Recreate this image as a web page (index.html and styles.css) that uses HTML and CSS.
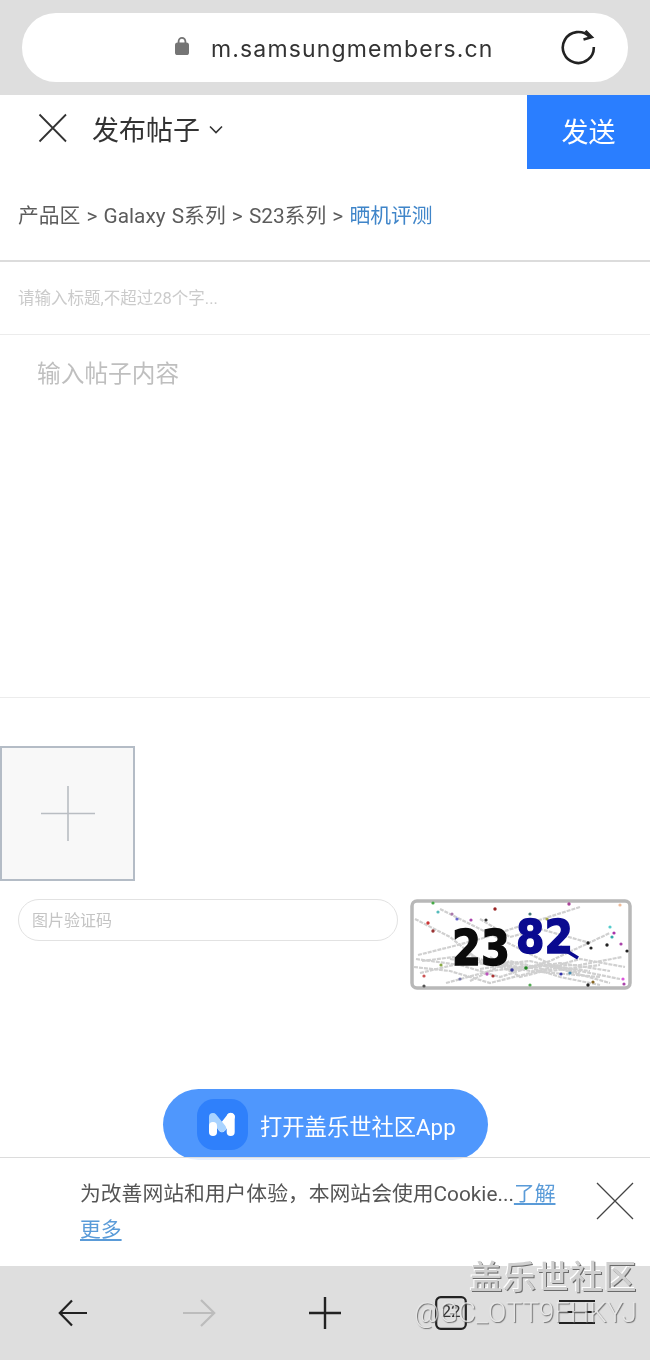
FILE: index.html
```html
<!DOCTYPE html>
<html lang="zh-CN">
<head>
<meta charset="utf-8">
<title>发布帖子</title>
<link rel="stylesheet" href="styles.css">
</head>
<body>
<div class="screen">
  <div class="urlbar">
    <div class="urlpill">
      <svg class="lock" width="16" height="20" viewBox="0 0 16 20"><path d="M4.600 8V5.200a3.400 3.400 0 0 1 6.800 0V8" fill="none" stroke="#757575" stroke-width="1.800"/><rect x="1" y="6.500" width="14" height="12.500" rx="2.600" fill="#757575"/></svg>
      <span class="url">m.samsungmembers.cn</span>
      <svg class="reload" width="36" height="38" viewBox="0 0 36 38"><path d="M33.800 18A15.500 15.500 0 1 1 29.500 7.800" fill="none" stroke="#222" stroke-width="2.600"/><path d="M25.500 1.800 31.800 8.200 23.500 10.500" fill="none" stroke="#222" stroke-width="2.600"/></svg>
    </div>
  </div>

  <header class="topbar">
    <svg class="close" width="30" height="30" viewBox="0 0 30 30"><path d="M1.500 1.500 28 28.500M28 1.500 1.500 28.500" stroke="#333" stroke-width="1.800" fill="none"/></svg>
    <span class="title">发布帖子</span>
    <svg class="chev" width="14" height="9" viewBox="0 0 14 9"><path d="M1 1.500 7 7.500 13 1.500" stroke="#333" stroke-width="1.600" fill="none"/></svg>
    <button class="send">发送</button>
  </header>

  <nav class="crumbs">产品区 &gt; Galaxy S系列 &gt; S23系列 &gt; <a class="crumb-current">晒机评测</a></nav>

  <div class="title-input">请输入标题,不超过28个字...</div>
  <div class="content-input">输入帖子内容</div>

  <section class="uploads">
    <div class="upload">
      <svg width="54" height="56" viewBox="0 0 54 56"><path d="M27 0V55M0 27.500H54" stroke="#b9bdc2" stroke-width="1.600" fill="none"/></svg>
    </div>
  </section>

  <section class="captcha">
    <div class="captcha-input">图片验证码</div>
    <svg class="captcha-img" width="222" height="91" viewBox="0 0 222 91">
      <rect x="2" y="2" width="218" height="87" rx="5" fill="#fff" stroke="#b8b8b8" stroke-width="3.500"/>
      <g class="noise" fill="none" stroke="#d0d0d0" stroke-width="2.200" stroke-dasharray="4 1">
        <path d="M5 20 40 38 70 62 120 72 190 78"/>
        <path d="M8 56 40 48 70 40 120 24 170 8"/>
        <path d="M6 60 50 66 90 78 140 62 200 34"/>
        <path d="M4 68 40 72 80 84 120 74 170 60 215 68"/>
        <path d="M30 10 70 30 110 50 150 70 200 84"/>
        <path d="M10 74 60 62 110 68 170 66 212 58"/>
        <path d="M36 84 80 72 130 66 180 72"/>
        <path d="M60 82 100 62 150 78 190 86"/>
        <path d="M70 20 100 38 130 30 180 44"/>
        <path d="M12 62 60 56 100 72 150 64 200 72"/>
        <path d="M40 60 80 66 120 62 170 74"/>
        <path d="M70 70 110 64 140 72 190 66"/>
        <path d="M80 58 110 78 150 68 210 80"/>
      </g>
      <g class="noise">
        <circle cx="18" cy="24" r="1.700" fill="#c33"/><circle cx="23" cy="32" r="1.700" fill="#933"/><circle cx="28" cy="13" r="1.600" fill="#5bb"/><circle cx="23" cy="4" r="1.600" fill="#4a4"/><circle cx="42" cy="15" r="1.600" fill="#a7a"/><circle cx="47" cy="20" r="1.600" fill="#66c"/><circle cx="61" cy="21" r="1.600" fill="#a4a"/><circle cx="76" cy="21" r="1.600" fill="#333"/><circle cx="85" cy="10" r="1.700" fill="#922"/><circle cx="120" cy="15" r="1.600" fill="#477"/><circle cx="137" cy="20" r="1.600" fill="#aa4"/><circle cx="210" cy="6" r="1.600" fill="#eb9"/><circle cx="159" cy="5" r="1.700" fill="#a49"/><circle cx="200" cy="28" r="1.600" fill="#5cc"/><circle cx="178" cy="44" r="1.700" fill="#222"/><circle cx="204" cy="34" r="1.600" fill="#a3a"/><circle cx="202" cy="38" r="1.600" fill="#3aa"/><circle cx="197" cy="46" r="1.700" fill="#222"/><circle cx="211" cy="45" r="1.600" fill="#a4a"/><circle cx="217" cy="52" r="1.600" fill="#222"/><circle cx="181" cy="49" r="1.600" fill="#222"/><circle cx="14" cy="77" r="1.600" fill="#c55"/><circle cx="50" cy="80" r="1.600" fill="#77a"/><circle cx="31" cy="66" r="1.600" fill="#8a4"/><circle cx="77" cy="75" r="1.700" fill="#b5b"/><circle cx="83" cy="77" r="1.600" fill="#a33"/><circle cx="116" cy="69" r="1.800" fill="#282"/><circle cx="102" cy="71" r="1.800" fill="#339"/><circle cx="151" cy="75" r="1.600" fill="#33a"/><circle cx="183" cy="83" r="1.600" fill="#862"/><circle cx="213" cy="80" r="1.600" fill="#d5d"/><circle cx="214" cy="85" r="1.600" fill="#a4a"/><circle cx="14" cy="87" r="1.600" fill="#555"/><circle cx="178" cy="86" r="1.700" fill="#222"/><circle cx="120" cy="86" r="1.600" fill="#5a5"/><circle cx="160" cy="74" r="1.600" fill="#48a"/>
      </g>
      <text class="cap-a" x="42" y="66" textLength="58" lengthAdjust="spacingAndGlyphs">23</text>
      <text class="cap-b" x="106" y="54" textLength="57" lengthAdjust="spacingAndGlyphs">82</text>
      <path class="cap-tail" d="M150 48 168 59"/>
    </svg>
  </section>

  <div class="bottom">
    <div class="cookie">
      <p class="cookie-text">为改善网站和用户体验，本网站会使用Cookie...<a class="cookie-link">了解更多</a></p>
      <svg class="cookie-close" width="38" height="38" viewBox="0 0 38 38"><path d="M1 1 37 37M37 1 1 37" stroke="#444" stroke-width="1.300" fill="none"/></svg>
    </div>
    <footer class="toolbar">
      <svg width="30" height="28" viewBox="0 0 30 28"><path d="M29 14H2M14 1.500 1.800 14 14 26.500" stroke="#222" stroke-width="2.200" fill="none"/></svg>
      <svg width="34" height="30" viewBox="0 0 34 30"><path d="M1 15H32M19 2 32.200 15 19 28" stroke="#bcbcbc" stroke-width="2.200" fill="none"/></svg>
      <svg width="32" height="32" viewBox="0 0 32 32"><path d="M16 0V32M0 16H32" stroke="#222" stroke-width="2.400" fill="none"/></svg>
      <svg width="32" height="34" viewBox="0 0 32 34"><rect x="1.200" y="1.200" width="29.600" height="31.600" rx="4.500" stroke="#222" stroke-width="2.200" fill="none"/><text class="tab-count" x="16" y="21" text-anchor="middle">22</text></svg>
      <svg width="36" height="28" viewBox="0 0 36 28"><path d="M0 2H36M0 13H36M0 24H36" stroke="#222" stroke-width="2.200" fill="none"/></svg>
    </footer>
  </div>

  <a class="open-app">
    <svg width="51" height="51" viewBox="0 0 51 51">
      <rect width="51" height="51" rx="17" fill="#2f80fb"/>
      <path d="M33.700 18 25 29" stroke="#fff" stroke-width="8" stroke-linecap="round" fill="none"/>
      <path d="M16 27V18L25 29" stroke="#a9d3ff" stroke-width="8" stroke-linecap="round" stroke-linejoin="round" fill="none"/>
      <path d="M16 27V33" stroke="#fff" stroke-width="8" stroke-linecap="round" fill="none"/>
      <path d="M33.700 18V33" stroke="#fff" stroke-width="8" stroke-linecap="round" fill="none"/>
    </svg>
    <span>打开盖乐世社区App</span>
  </a>

  <div class="watermark">
    <div class="wm-top">盖乐世社区</div>
    <div class="wm-bottom">@GC_OTT9FHKYJ</div>
  </div>
</div>
</body>
</html>
```
FILE: styles.css
```css
* { box-sizing: border-box; }
html, body { margin: 0; padding: 0; background: #fff; }
body { font-family: Roboto, "Noto Sans CJK SC", sans-serif; }
.screen { position: relative; width: 650px; height: 1360px; overflow: hidden; display: flex; flex-direction: column; background: #fff; filter: blur(0.4px); }

.urlbar { height: 95px; flex: none; padding: 13px 22px; background: #dedede; }
.urlpill { height: 69px; background: #fff; border-radius: 34px; display: flex; align-items: center; padding-left: 152px; padding-right: 32px; }
.lock { flex: none; margin-top: -4px; }
.url { margin-left: 21px; font-family: Inter, "Noto Sans", sans-serif; font-size: 23px; letter-spacing: 1.150px; color: #333; flex: 1; margin-top: 2px; }
.reload { flex: none; }

.topbar { height: 74px; flex: none; display: flex; align-items: center; padding-left: 38px; position: relative; }
.close { flex: none; margin-top: -8px; }
.title { margin-left: 24px; font-size: 27px; color: #333; margin-top: -8px; }
.chev { margin-left: 9px; margin-top: -6px; flex: none; }
.send { margin-left: auto; width: 123px; height: 74px; border: 0; background: #2a7eff; color: #fff; font-family: inherit; font-size: 27px; padding: 0 0 4px; }

.crumbs { height: 93px; flex: none; display: flex; align-items: center; white-space: pre; padding: 0 0 1px 18px; font-size: 20.800px; word-spacing: 1px; color: #5c5c5c; border-bottom: 2px solid #dcdcdc; }
.crumb-current { color: #3f85c9; }

.title-input { height: 73px; flex: none; display: flex; align-items: center; padding: 0 0 2px 18px; font-size: 16.500px; color: #cbcbcb; border-bottom: 1px solid #ececec; }
.content-input { height: 363px; flex: none; padding: 22px 0 0 37px; font-size: 23.700px; line-height: 34px; color: #bfbfbf; border-bottom: 1px solid #ececec; }

.uploads { padding-top: 48px; flex: none; }
.upload { width: 135px; height: 135px; border: 2px solid #b4bcc6; background: #f8f8f8; display: flex; align-items: center; justify-content: center; }

.captcha { display: flex; padding: 18px 18px 0; align-items: flex-start; justify-content: space-between; flex: none; }
.captcha-input { width: 380px; height: 42px; border: 1px solid #e2e2e2; border-radius: 21px; display: flex; align-items: center; padding: 0 0 2px 13px; font-size: 16px; color: #c4c4c4; }
.captcha-img { flex: none; display: block; }
.noise { filter: blur(0.6px); }
.cap-a, .cap-b { font-family: "DejaVu Sans", sans-serif; font-weight: 700; stroke-width: 1.500px; filter: blur(0.6px); }
.cap-a { font-size: 50px; fill: #0b0b0b; stroke: #0b0b0b; }
.cap-b { font-size: 47px; fill: #0a0a90; stroke: #0a0a90; }
.cap-tail { stroke: #0a0a90; stroke-width: 3.500px; fill: none; filter: blur(0.6px); }

.bottom { margin-top: auto; flex: none; position: relative; z-index: 2; }
.cookie { height: 109px; border-top: 1px solid #dcdcdc; background: rgba(255, 255, 255, .86); padding: 18px 16px 0 80px; display: flex; justify-content: space-between; align-items: flex-start; }
.cookie-text { margin: 0; width: 480px; font-size: 20.800px; line-height: 36px; color: #555; }
.cookie-link { color: #5a9bd8; text-decoration: underline; }
.cookie-close { flex: none; margin-top: 6px; }

.toolbar { height: 94px; background: #dedede; display: grid; grid-template-columns: repeat(5, 126px); align-items: center; justify-items: center; padding-left: 10px; }
.tab-count { font-family: Roboto, sans-serif; font-size: 17px; fill: #333; }

.open-app { position: absolute; left: 163px; top: 1089px; width: 325px; height: 71px; border-radius: 36px; background: #4f97fd; display: flex; align-items: center; padding-left: 34px; color: #fff; font-size: 22.300px; gap: 12px; }

.watermark { position: absolute; z-index: 3; right: 13px; top: 1261px; text-align: right; line-height: 1; }
.wm-top { font-size: 33px; font-weight: 500; letter-spacing: 0.500px; color: #cfcfcf; text-shadow: 1px 1px 0 #6a6a6a, -1px -1px 0 #fff; }
.wm-bottom { margin-top: 5px; font-size: 27.500px; font-family: Roboto, sans-serif; font-weight: 300; color: #e8e8e8; opacity: .8; text-shadow: 1px 1px 1px #555; }
```
